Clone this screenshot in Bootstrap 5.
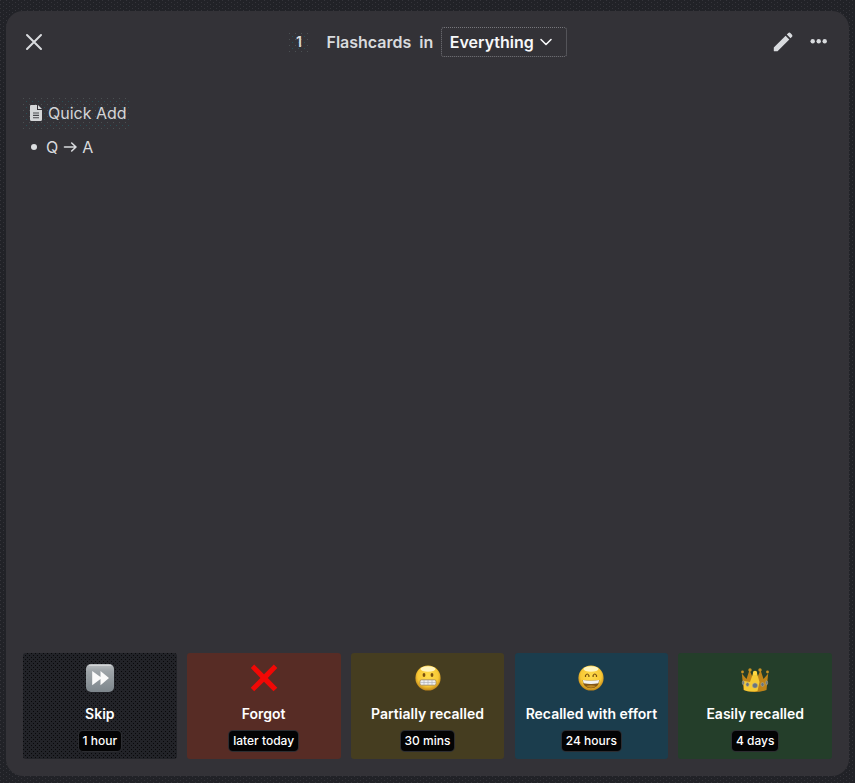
<!DOCTYPE html>
<html lang="en">
<head>
<meta charset="utf-8">
<meta name="viewport" content="width=device-width, initial-scale=1">
<title>Flashcards</title>
<link href="https://cdn.jsdelivr.net/npm/bootstrap@5.3.0/dist/css/bootstrap.min.css" rel="stylesheet">
<style>
body{background:conic-gradient(#323238 25%,transparent 0) 0 0/4px 4px,#212227;background:linear-gradient(#34343a,#34343a) 0 0/4px 4px,#212227;font-family:Inter,"Liberation Sans",sans-serif;color:#d9dbde;height:783px;padding:11px 6px 7px;font-size:16px;line-height:24px;overflow:hidden}
body{background:radial-gradient(circle at .5px .5px,#34343a .6px,transparent .7px) 0 0/6px 4px,radial-gradient(circle at .5px .5px,#34343a .6px,transparent .7px) 3px 2px/6px 4px,#212227}
.panel{background:#333237;border-radius:17px;padding:15px 17px 17px}
.topbar{height:32px}
.icon-btn{background:none;border:0;padding:0;color:#d9dbde;line-height:0}
.close-btn{width:22px}
.due{width:20px;height:20px;line-height:20px;text-align:center;font-size:14px;font-weight:600;margin-left:244px}
.heading{font-weight:600;margin-left:17.5px}
.in-word{font-weight:600;margin-left:8px}
.scope{height:30px;width:126px;border:1px dotted #77777c;border-radius:3px;margin-left:7.5px;padding:0 0 0 8px;color:#f7f8f9;font-weight:600;background:none}
.tools{margin-right:4px;gap:17px}
.doc{margin-top:39px;height:32px;width:107px;padding-left:6px;color:#d4d6d8}
.due,.doc{background:radial-gradient(circle at .5px .5px,#4b5052 .6px,transparent .7px) 0 1px/6px 6px,radial-gradient(circle at .5px .5px,#285057 .6px,transparent .7px) 3px 4px/6px 6px}
.doc-name{margin-left:5px}
.rem{height:24px;margin-top:6px;padding-left:8px}
.bullet{width:6px;height:6px;margin-right:9px;background:#dcdee0}
.ratings{gap:10.2px;height:106px}
.rating{flex:1 1 0;border:0;border-radius:3px;color:#fff;padding:11px 0 0;min-width:0}
.rating svg{display:block}
.rating-name{font-size:14px;line-height:20px;font-weight:600;margin-top:12px;white-space:nowrap}
.interval{font-size:12px;line-height:20px;height:20px;font-weight:500;background:#030304;border-radius:4px;padding:0 4px;margin-top:7px;box-shadow:0 0 0 1px #2c2d31;white-space:nowrap}
.skip{background:radial-gradient(circle at .5px .5px,#08080a .6px,transparent .7px) 0 0/4px 4px,radial-gradient(circle at .5px .5px,#08080a .6px,transparent .7px) 2px 2px/4px 4px,#222328}
.forgot{background:#572c25}.partial{background:#453d20}.effort{background:#1b3d4d}.easy{background:#243e2a}
</style>
</head>
<body>
<main class="panel h-100 d-flex flex-column">
<header class="topbar d-flex align-items-center">
<button class="icon-btn close-btn" aria-label="Close"><svg width="22" height="22" viewBox="0 0 22 22" fill="none" stroke="currentColor" stroke-width="2" stroke-linecap="round"><path d="M4 4l14 14M18 4L4 18"/></svg></button>
<span class="due">1</span>
<span class="heading">Flashcards</span>
<span class="in-word">in</span>
<button class="scope d-flex align-items-center"><span>Everything</span><svg class="ms-1" width="16" height="16" viewBox="0 0 16 16" fill="none" stroke="currentColor" stroke-width="1.6" stroke-linecap="round" stroke-linejoin="round"><path d="M3 5.500l5 5 5-5"/></svg></button>
<div class="tools d-flex align-items-center ms-auto">
<button class="icon-btn" aria-label="Edit"><svg width="20" height="20" viewBox="0 0 20 20" fill="currentColor"><path d="M.8 15.500L12.600 3.700l3.700 3.700L4.500 19.200H1.300a.5.5 0 0 1-.5-.5zM13.800 2.500l1.300-1.300a1.800 1.800 0 0 1 2.500 0l1.200 1.200a1.800 1.800 0 0 1 0 2.500l-1.300 1.300z"/></svg></button>
<button class="icon-btn" aria-label="More"><svg width="18" height="18" viewBox="0 0 18 18" fill="currentColor"><circle cx="2.700" cy="8.300" r="2.200"/><circle cx="8.700" cy="8.300" r="2.200"/><circle cx="14.700" cy="8.300" r="2.200"/></svg></button>
</div>
</header>
<section class="flex-grow-1">
<div class="doc d-flex align-items-center"><svg width="14" height="16" viewBox="0 0 14 16"><path fill="#d4d6d8" d="M1.800 0H8v5h5v9.500a1.500 1.500 0 0 1-1.500 1.500h-9A1.500 1.500 0 0 1 1 14.500V1.500A1.500 1.500 0 0 1 1.800 0zM9 0l4 4H9z"/><path stroke="#47484c" stroke-width="1.100" d="M4 8h6M4 10.400h6M4 12.800h6"/></svg><span class="doc-name">Quick Add</span></div>
<div class="rem d-flex align-items-center"><span class="bullet rounded-circle"></span><span>Q</span><svg class="mx-1" width="16" height="16" viewBox="0 0 16 16" fill="none" stroke="currentColor" stroke-width="1.600" stroke-linecap="round" stroke-linejoin="round"><path d="M2.500 8h11.500M9.700 4L14 8l-4.300 4"/></svg><span>A</span></div>
</section>
<footer class="ratings d-flex">
<button class="rating skip d-flex flex-column align-items-center">
<svg width="28" height="28" viewBox="0 0 28 28"><defs><linearGradient id="g" x2="0" y2="1"><stop stop-color="#bcc0c3"/><stop offset=".25" stop-color="#9ea4a8"/><stop offset="1" stop-color="#7d868c"/></linearGradient></defs><rect width="28" height="28" rx="5" fill="url(#g)"/><path d="M3 1.500h22" stroke="#d4d6d7"/><path fill="#fafafa" d="M6.200 7l8.300 6V7l8.500 7-8.500 7.200V15l-8.300 6.200z"/></svg>
<span class="rating-name">Skip</span><span class="interval">1 hour</span></button>
<button class="rating forgot d-flex flex-column align-items-center">
<svg width="28" height="28" viewBox="0 0 28 28"><path fill="#f10805" d="M4.200.5L14 10.300 23.800.5l3.500 3.500L17.800 14l9.500 9.800-3.800 3.500L14 17.800l-9.800 9.500-3.500-3.500L10.400 14 .8 4z"/></svg>
<span class="rating-name">Forgot</span><span class="interval">later today</span></button>
<button class="rating partial d-flex flex-column align-items-center">
<svg width="28" height="28" viewBox="0 0 28 28"><defs><radialGradient id="f" cx=".5" cy=".42" r=".58"><stop stop-color="#ffdc4c"/><stop offset=".7" stop-color="#f8c936"/><stop offset="1" stop-color="#bf8317"/></radialGradient></defs><circle cx="14" cy="14" r="12.600" fill="url(#f)"/><ellipse cx="14" cy="5" rx="7.500" ry="2.800" fill="#fff4bd"/><ellipse cx="10" cy="11" rx="1.400" ry="1.900" fill="#79500f"/><ellipse cx="18" cy="11" rx="1.400" ry="1.900" fill="#79500f"/><rect x="6" y="15.800" width="16" height="5.400" rx="1.500" fill="#eef0f2" stroke="#a2844c" stroke-width=".8"/><path d="M6.500 18.500h15M10 16v5M14 16v5M18 16v5" stroke="#a9adb2" stroke-width=".6"/></svg>
<span class="rating-name">Partially recalled</span><span class="interval">30 mins</span></button>
<button class="rating effort d-flex flex-column align-items-center">
<svg width="28" height="28" viewBox="0 0 28 28"><circle cx="14" cy="14" r="12.600" fill="url(#f)"/><ellipse cx="14" cy="5" rx="7.500" ry="2.800" fill="#fff4bd"/><path d="M8.500 13V11.500q1.700-3 3.400 0V13M16.100 13V11.500q1.700-3 3.400 0V13" fill="none" stroke="#79500f" stroke-width="1.200"/><path d="M5.500 16q8.500 1.500 17 0-.8 8.300-8.500 8.300T5.500 16z" fill="#835616"/><path d="M5.800 16q8.200 1.500 16.400 0l-.8 3.200q-7.400 1.500-14.800 0z" fill="#f2f3f2"/><path d="M9 22q5-1.500 10 0-2 1.800-5 1.800T9 22z" fill="#c18a22"/></svg>
<span class="rating-name">Recalled with effort</span><span class="interval">24 hours</span></button>
<button class="rating easy d-flex flex-column align-items-center">
<svg width="28" height="28" viewBox="0 0 28 28"><path fill="#be8419" d="M2.500 26L.8 9.500 5.500 15l3-9 3 7h5l3-7 3 9 4.700-5.500L25.500 26q-11.500 4-23 0z"/><path fill="#f4ca34" d="M3 17l6 1 2.500-7Q12 8 14 8t2.500 3l2 7-2 9Q8 28.500 3 26z"/><g fill="#c99222"><circle cx="1.500" cy="8" r="1.400"/><circle cx="9" cy="6" r="1.700"/><circle cx="19" cy="6" r="1.700"/><circle cx="26.500" cy="8" r="1.400"/></g><circle cx="14" cy="9" r="2.200" fill="#ffd941"/><g fill="#69747e" stroke="#bbb58e" stroke-width=".5"><circle cx="14" cy="21.500" r="2.600"/><ellipse cx="6.500" cy="20.500" rx="1.600" ry="2"/><ellipse cx="21.500" cy="20.500" rx="1.600" ry="2"/><ellipse cx="2.300" cy="18.800" rx="1" ry="2"/><ellipse cx="25.700" cy="18.800" rx="1" ry="2"/></g></svg>
<span class="rating-name">Easily recalled</span><span class="interval">4 days</span></button>
</footer>
</main>
<script src="https://cdn.jsdelivr.net/npm/bootstrap@5.3.0/dist/js/bootstrap.bundle.min.js"></script>
</body>
</html>
